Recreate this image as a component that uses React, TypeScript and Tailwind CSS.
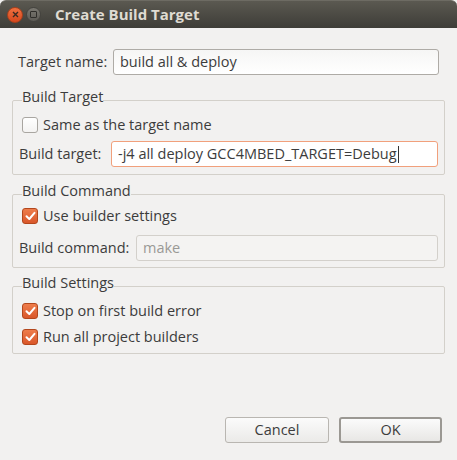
import { FC, ReactNode } from 'react'

// Ubuntu/GTK "Create Build Target" dialog
const font = { fontFamily: '"Open Sans", "DejaVu Sans", sans-serif' }

const Check: FC<{ checked?: boolean; label: string }> = ({ checked, label }) => (
  <div className="flex items-center h-[16px]">
    {checked ? (
      <span className="w-[16px] h-[16px] rounded-[3px] border border-[#b3471c] bg-gradient-to-b from-[#ee7d4b] to-[#d9572a] flex items-center justify-center">
        <svg width="11" height="10" viewBox="0 0 11 10">
          <path d="M1.5 5.2 L4.3 8 L9.5 1.8" fill="none" stroke="#fff" strokeWidth="2" strokeLinecap="round" strokeLinejoin="round" />
        </svg>
      </span>
    ) : (
      <span className="w-[16px] h-[16px] rounded-[3px] border border-[#a9a6a1] bg-gradient-to-b from-white to-[#f4f3f2]" />
    )}
    <span className="ml-[5px] text-[14.5px] leading-[20px] text-[#3c3c3c]">{label}</span>
  </div>
)

const Group: FC<{ title: string; children: ReactNode; className?: string }> = ({ title, children, className }) => (
  <fieldset className={`border border-[#d3d0ca] rounded-[2px] px-[6px] ${className || ''}`}>
    <legend className="ml-[3px] px-0 text-[14.5px] leading-[20px] pb-[6px] text-[#3c3c3c]">{title}</legend>
    {children}
  </fieldset>
)

export default function App() {
  return (
    <div className="w-[457px] h-[460px] bg-[#f2f1f0] flex flex-col overflow-hidden" style={font}>
      {/* title bar */}
      <div className="h-[28px] shrink-0 rounded-t-[6px] bg-gradient-to-b from-[#5b5951] to-[#3e3d38] border-t border-[#6d6b63] flex items-center pl-[7px]">
        <span className="w-[16px] h-[16px] rounded-full bg-gradient-to-b from-[#f0703f] to-[#d6471c] border border-[#a8401c] flex items-center justify-center">
          <svg width="7" height="7" viewBox="0 0 7 7">
            <path d="M1 1 L6 6 M6 1 L1 6" stroke="#3a2a22" strokeWidth="1.4" />
          </svg>
        </span>
        <span className="ml-[3px] w-[15px] h-[15px] rounded-full bg-gradient-to-b from-[#7a7871] to-[#5d5b55] border border-[#44433e] flex items-center justify-center">
          <span className="w-[7px] h-[7px] border border-[#2f2e2a] rounded-[1px]" />
        </span>
        <span className="ml-[14px] text-[15px] font-bold text-[#dfdbd2]">Create Build Target</span>
      </div>

      <div className="flex-1 flex flex-col px-[12px] pt-[21px] text-[#3c3c3c]">
        <div className="flex items-center pl-[6px] pr-[6px]">
          <span className="text-[14.5px] w-[95px]">Target name:</span>
          <div className="flex-1 h-[26px] rounded-[3px] border border-[#aeaba6] bg-gradient-to-b from-[#f6f6f5] to-white flex items-center px-[6px] text-[14.5px]">
            build all &amp; deploy
          </div>
        </div>

        <Group title="Build Target" className="mt-[12px] pb-[7px]">
          <div className="pl-[3px] mt-[4px]">
            <Check label="Same as the target name" />
          </div>
          <div className="flex items-center mt-[8px]">
            <span className="text-[14.5px] w-[92px]">Build target:</span>
            <div className="flex-1 h-[26px] rounded-[3px] border border-[#f1a07c] bg-white flex items-center px-[6px] text-[14.5px]">
              -j4 all deploy GCC4MBED_TARGET=Debug
              <span className="w-px h-[17px] bg-[#333] ml-[1px]" />
            </div>
          </div>
        </Group>

        <Group title="Build Command" className="mt-[6px] pb-[6px]">
          <div className="pl-[3px] mt-[1px]">
            <Check checked label="Use builder settings" />
          </div>
          <div className="flex items-center mt-[11px]">
            <span className="text-[14.5px] w-[117px]">Build command:</span>
            <div className="flex-1 h-[26px] rounded-[3px] border border-[#d3d0cb] bg-[#f4f3f2] flex items-center px-[6px] text-[14.5px] text-[#9a9996]">
              make
            </div>
          </div>
        </Group>

        <Group title="Build Settings" className="mt-[5px] pb-[8px]">
          <div className="pl-[3px] mt-[4px] flex flex-col gap-[10px]">
            <Check checked label="Stop on first build error" />
            <Check checked label="Run all project builders" />
          </div>
        </Group>

        <div className="mt-auto mb-[17px] flex justify-end gap-[10px] pr-[3px]">
          <button className="w-[104px] h-[26px] rounded-[3px] border border-[#b9b6b1] bg-gradient-to-b from-[#fbfbfb] to-[#ebeae8] text-[14.5px] text-[#3c3c3c]">
            Cancel
          </button>
          <button className="w-[103px] h-[26px] rounded-[3px] border-2 border-[#9b9893] bg-gradient-to-b from-[#fbfbfb] to-[#e8e7e5] text-[14.5px] text-[#3c3c3c]">
            OK
          </button>
        </div>
      </div>
    </div>
  )
}
